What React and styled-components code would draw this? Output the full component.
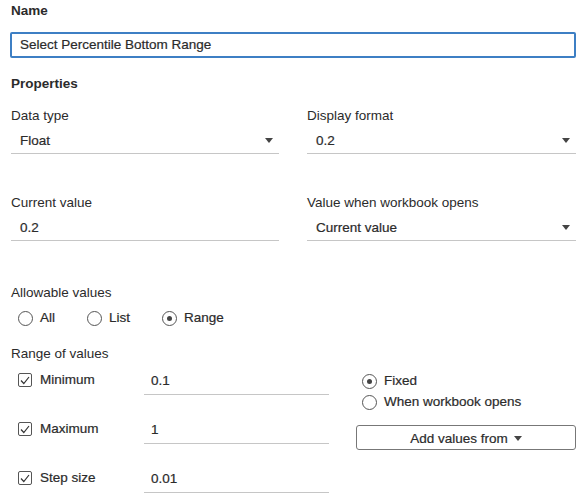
import styled, { createGlobalStyle } from 'styled-components';

const GlobalStyle = createGlobalStyle`
  body {
    margin: 0;
    background: #fff;
    font-family: "Liberation Sans", Arial, sans-serif;
    font-size: 13.5px;
    line-height: 16px;
    color: #2b2b2b;
  }
`;

const Page = styled.div`
  width: 583px;
  height: 498px;
  box-sizing: border-box;
  padding: 3px 7px 0 11px;
  overflow: hidden;
`;

const Heading = styled.div`
  font-weight: bold;
  line-height: 16px;
  margin-top: ${(p) => p.top || 0}px;
`;

const Label = styled.div`
  line-height: 16px;
  margin-top: ${(p) => p.top || 0}px;
`;

const NameInput = styled.div`
  margin: 13px 0 0 -1px;
  height: 26px;
  box-sizing: border-box;
  border: 2px solid #3d7fc4;
  border-radius: 2px;
  padding-left: 8px;
  display: flex;
  align-items: center;
  -webkit-text-stroke: 0.2px #2b2b2b;
`;

const Columns = styled.div`
  display: grid;
  grid-template-columns: 268px 269px;
  column-gap: 28px;
  margin-top: ${(p) => p.top || 0}px;
`;

const Select = styled.div`
  height: 30px;
  box-sizing: border-box;
  border-bottom: 1px solid #c6c6c6;
  padding: 4px 6px 0 9px;
  display: flex;
  align-items: center;
  justify-content: space-between;
  -webkit-text-stroke: 0.2px #2b2b2b;
`;

const Caret = styled.span`
  width: 0;
  height: 0;
  border-left: 4px solid transparent;
  border-right: 4px solid transparent;
  border-top: 5px solid #444;
  margin-left: ${(p) => p.gap || 0}px;
`;

const RadioGroup = styled.div`
  display: flex;
  flex-direction: ${(p) => (p.column ? 'column' : 'row')};
  gap: ${(p) => (p.column ? 5 : 32)}px;
  margin-top: ${(p) => p.top || 0}px;
  padding-left: ${(p) => p.indent || 0}px;
`;

const Option = styled.label`
  display: flex;
  align-items: center;
  gap: 7px;
  line-height: 16px;
  -webkit-text-stroke: 0.2px #2b2b2b;
`;

const Radio = styled.span`
  width: 15px;
  height: 15px;
  box-sizing: border-box;
  border: 1px solid #555;
  border-radius: 50%;
  display: flex;
  align-items: center;
  justify-content: center;
  &::after {
    content: '';
    display: ${(p) => (p.checked ? 'block' : 'none')};
    width: 5px;
    height: 5px;
    border-radius: 50%;
    background: #444;
  }
`;

const RangeGrid = styled.div`
  display: grid;
  grid-template-columns: 345px 220px;
  margin-top: 6px;
`;

const RangeRows = styled.div`
  display: flex;
  flex-direction: column;
  gap: 22px;
`;

const RangeRow = styled.div`
  display: flex;
  align-items: center;
  height: 27px;
  padding-left: 7px;
`;

const CheckLabel = styled.label`
  width: 126px;
  display: flex;
  align-items: center;
  gap: 8px;
  margin-top: -3px;
  -webkit-text-stroke: 0.2px #2b2b2b;
`;

const Checkbox = styled.span`
  width: 14px;
  height: 14px;
  box-sizing: border-box;
  border: 1px solid #555;
  border-radius: 2px;
  display: flex;
  align-items: center;
  justify-content: center;
`;

const ValueInput = styled.div`
  width: 185px;
  height: 27px;
  box-sizing: border-box;
  padding: 0 7px;
  border-bottom: 1px solid #c6c6c6;
  display: flex;
  align-items: center;
  -webkit-text-stroke: 0.2px #2b2b2b;
`;

const Side = styled.div`
  display: flex;
  flex-direction: column;
  margin-top: 5px;
`;

const Button = styled.button`
  margin-top: 15px;
  width: 220px;
  height: 25px;
  padding: 1px 0 0;
  background: #fff;
  border: 1px solid #777;
  border-radius: 3px;
  font-family: inherit;
  font-size: 13.5px;
  color: #2b2b2b;
  display: flex;
  align-items: center;
  justify-content: center;
  -webkit-text-stroke: 0.2px #2b2b2b;
`;

const Check = () => (
  <Checkbox>
    <svg width="10" height="9" viewBox="0 0 10 9">
      <path d="M1 4.5 L3.8 7.5 L9 1" fill="none" stroke="#333" strokeWidth="1.2" />
    </svg>
  </Checkbox>
);

const rangeRows = [
  { label: 'Minimum', value: '0.1' },
  { label: 'Maximum', value: '1' },
  { label: 'Step size', value: '0.01' },
];

const App = () => {
  return (
    <Page>
      <GlobalStyle />
      <Heading>Name</Heading>
      <NameInput>Select Percentile Bottom Range</NameInput>
      <Heading top={18}>Properties</Heading>

      <Columns top={16}>
        <div>
          <Label>Data type</Label>
          <Select>
            Float
            <Caret />
          </Select>
        </div>
        <div>
          <Label>Display format</Label>
          <Select>
            0.2
            <Caret />
          </Select>
        </div>
      </Columns>

      <Columns top={41}>
        <div>
          <Label>Current value</Label>
          <Select>0.2</Select>
        </div>
        <div>
          <Label>Value when workbook opens</Label>
          <Select>
            Current value
            <Caret />
          </Select>
        </div>
      </Columns>

      <Label top={44}>Allowable values</Label>
      <RadioGroup top={9} indent={7}>
        <Option>
          <Radio />
          All
        </Option>
        <Option>
          <Radio />
          List
        </Option>
        <Option>
          <Radio checked />
          Range
        </Option>
      </RadioGroup>

      <Label top={20}>Range of values</Label>
      <RangeGrid>
        <RangeRows>
          {rangeRows.map((r) => (
            <RangeRow key={r.label}>
              <CheckLabel>
                <Check />
                {r.label}
              </CheckLabel>
              <ValueInput>{r.value}</ValueInput>
            </RangeRow>
          ))}
        </RangeRows>
        <Side>
          <RadioGroup column indent={6}>
            <Option>
              <Radio checked />
              Fixed
            </Option>
            <Option>
              <Radio />
              When workbook opens
            </Option>
          </RadioGroup>
          <Button>
            Add values from
            <Caret gap={6} />
          </Button>
        </Side>
      </RangeGrid>
    </Page>
  );
};

export default App;
